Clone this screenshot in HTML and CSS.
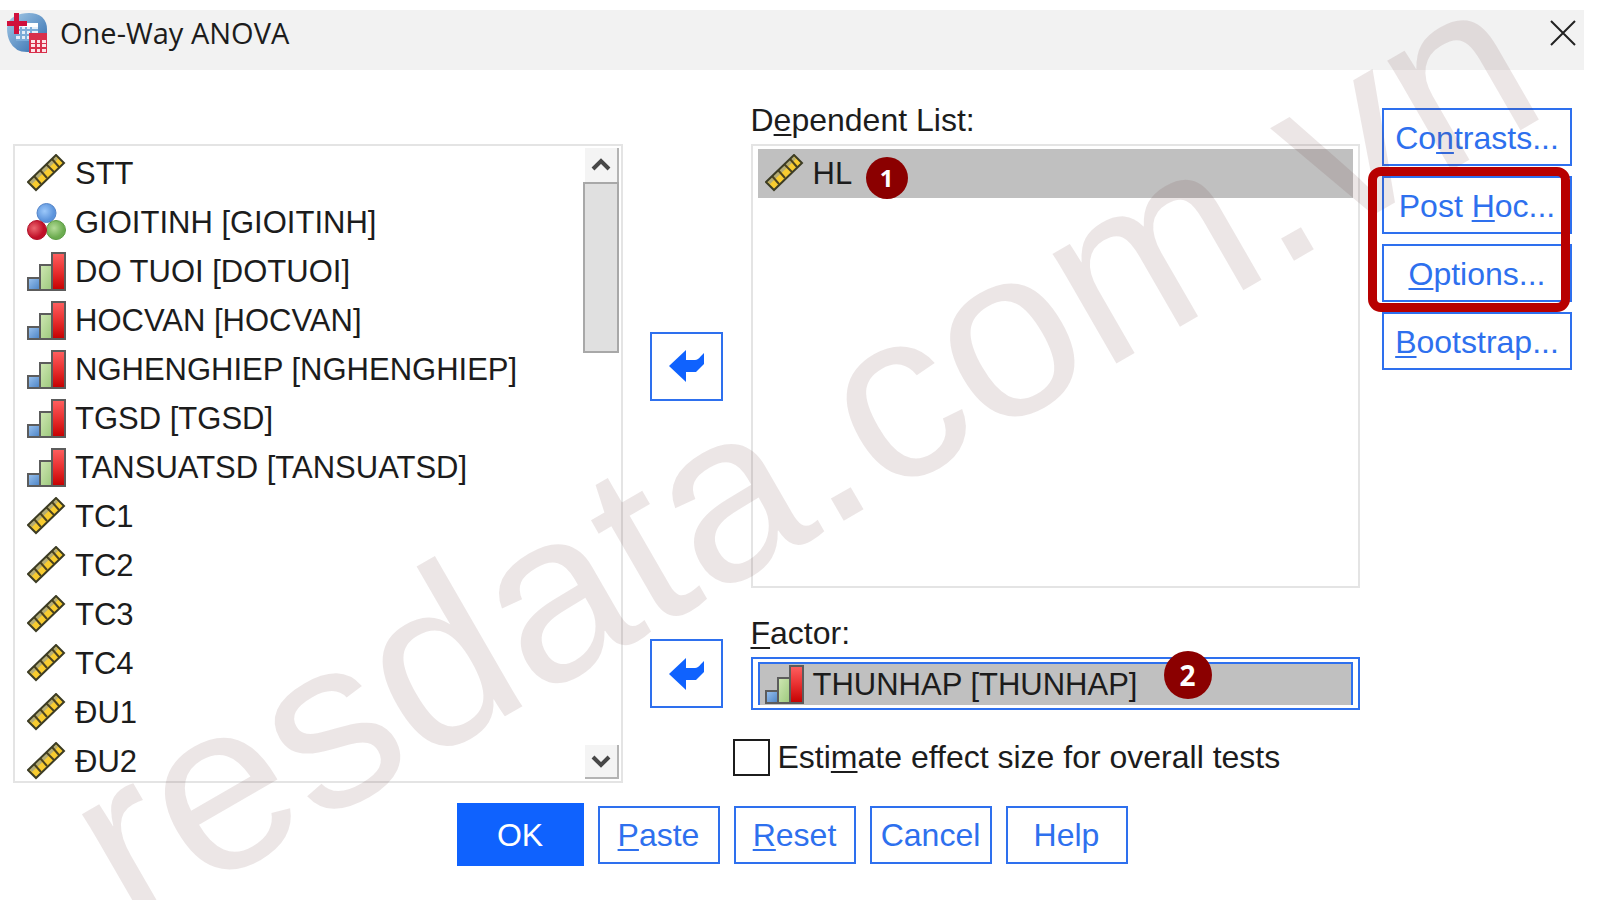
FILE: index.html
```html
<!DOCTYPE html>
<html lang="en">
<head>
<meta charset="UTF-8">
<meta name="viewport" content="width=device-width, initial-scale=1.0">
<title>One-Way ANOVA</title>
<link rel="stylesheet" href="styles.css">
</head>
<body>
<!-- icons shared by the lists -->
<svg class="sprite" aria-hidden="true">
  <defs>
    <linearGradient id="blueBar" x1="0" y1="0" x2="1" y2="1"><stop offset="0" stop-color="#9cc4f0"/><stop offset="1" stop-color="#4a82c4"/></linearGradient>
    <linearGradient id="greenBar" x1="0" y1="0" x2="1" y2="1"><stop offset="0" stop-color="#d0e8b4"/><stop offset="1" stop-color="#9cc87c"/></linearGradient>
    <linearGradient id="redBar" x1="0" y1="0" x2="0" y2="1"><stop offset="0" stop-color="#ff6060"/><stop offset="0.5" stop-color="#e83030"/><stop offset="1" stop-color="#c40000"/></linearGradient>
    <radialGradient id="blueBall" cx="0.4" cy="0.4"><stop offset="0" stop-color="#9cc8fa"/><stop offset="1" stop-color="#5c94dc"/></radialGradient>
    <radialGradient id="redBall" cx="0.35" cy="0.4"><stop offset="0" stop-color="#ec6870"/><stop offset="1" stop-color="#c01028"/></radialGradient>
    <radialGradient id="greenBall" cx="0.4" cy="0.4"><stop offset="0" stop-color="#b4dc98"/><stop offset="1" stop-color="#6cac50"/></radialGradient>
    <linearGradient id="globe" x1="0" y1="0" x2="1" y2="1"><stop offset="0" stop-color="#a8cce8"/><stop offset="0.6" stop-color="#5c90c4"/><stop offset="1" stop-color="#2c68a8"/></linearGradient>
  </defs>
  <symbol id="scale" viewBox="0 0 39 39">
    <path d="M1 28L29 1l8 8L9 36z" fill="#f8cc30"/>
    <path d="M2 27L28 2l3 3L5 30z" fill="#b4ac74"/>
    <path d="M7 22l7 8M13 16l7 8M19 10l8 8M25 5l7 8" stroke="#4c4420" stroke-width="2"/>
    <path d="M1 28L29 1l8 8L9 36z" fill="none" stroke="#3c3c24" stroke-width="2"/>
  </symbol>
  <symbol id="nominal" viewBox="0 0 39 39">
    <circle cx="19.500" cy="10" r="9.500" fill="url(#blueBall)" stroke="#5484c8"/>
    <circle cx="29" cy="27" r="9.500" fill="url(#greenBall)" stroke="#5c9c44"/>
    <circle cx="10" cy="27" r="9.500" fill="url(#redBall)" stroke="#b01028"/>
  </symbol>
  <symbol id="ordinal" viewBox="0 0 39 39">
    <g stroke="#5c5c5c" stroke-width="2">
      <path d="M1 26h12v12H1z" fill="url(#blueBar)"/>
      <path d="M13 13h12v25H13z" fill="url(#greenBar)"/>
      <path d="M25 1h13v37H25z" fill="url(#redBar)"/>
    </g>
  </symbol>
  <symbol id="move" viewBox="0 0 36 34">
    <path d="M0 17L17 1v10h9q3 0 6-4l3-3v11l-8 8H17v10z"/>
  </symbol>
</svg>

<div class="dialog">
  <header class="titlebar">
    <svg class="app-icon" viewBox="0 0 40 40" aria-hidden="true">
      <path d="M8 3Q14 0 22 0q8 0 13 4 5 5 5 12v12q0 11-12 11h-8Q8 39 3 29 0 23 0 15 1 6 8 3z" fill="url(#globe)"/>
      <path d="M12 11h19v17H9V20h3z" fill="#e4eef8"/>
      <path d="M9 17h22M9 22h22M9 27h16M14 14v14M19 14v14M24 14v14" stroke="#7cacd8" stroke-width="2"/>
      <path d="M16 10h15v4H16z" fill="#fff"/>
      <path d="M0 8h7V0h5v8h8v5h-8v8H7v-8H0z" fill="#d0103c"/>
      <path d="M22 20h18v20H22z" fill="#d8304c"/>
      <path d="M24 27h4v3h-4zM30 27h3v3h-3zM35 27h4v3h-4zM24 31h4v3h-4zM30 31h3v3h-3zM35 31h4v3h-4zM24 36h4v3h-4zM30 36h3v3h-3zM35 36h4v3h-4z" fill="#fce4e8"/>
    </svg>
    <h1>One-Way ANOVA</h1>
    <button type="button" class="close" aria-label="Close">
      <svg viewBox="0 0 26 26"><path d="M1 1l24 24M25 1L1 25" stroke="#222" stroke-width="2"/></svg>
    </button>
  </header>

  <form class="content">
    <div class="box source">
      <ul class="variables" role="listbox" aria-label="Variables">
        <li role="option"><svg><use href="#scale"/></svg>STT</li>
        <li role="option"><svg><use href="#nominal"/></svg>GIOITINH [GIOITINH]</li>
        <li role="option"><svg><use href="#ordinal"/></svg>DO TUOI [DOTUOI]</li>
        <li role="option"><svg><use href="#ordinal"/></svg>HOCVAN [HOCVAN]</li>
        <li role="option"><svg><use href="#ordinal"/></svg>NGHENGHIEP [NGHENGHIEP]</li>
        <li role="option"><svg><use href="#ordinal"/></svg>TGSD [TGSD]</li>
        <li role="option"><svg><use href="#ordinal"/></svg>TANSUATSD [TANSUATSD]</li>
        <li role="option"><svg><use href="#scale"/></svg>TC1</li>
        <li role="option"><svg><use href="#scale"/></svg>TC2</li>
        <li role="option"><svg><use href="#scale"/></svg>TC3</li>
        <li role="option"><svg><use href="#scale"/></svg>TC4</li>
        <li role="option"><svg><use href="#scale"/></svg>ĐU1</li>
        <li role="option"><svg><use href="#scale"/></svg>ĐU2</li>
      </ul>
      <div class="scrollbar">
        <button type="button" class="scroll-btn" aria-label="Scroll up"><svg viewBox="0 0 20 14"><path d="M2 11l8-8 8 8"/></svg></button>
        <div class="thumb"></div>
        <button type="button" class="scroll-btn down" aria-label="Scroll down"><svg viewBox="0 0 20 14"><path d="M2 3l8 8 8-8"/></svg></button>
      </div>
    </div>

    <button type="button" class="move move-dependent" aria-label="Move to Dependent List"><svg><use href="#move"/></svg></button>
    <button type="button" class="move move-factor" aria-label="Move to Factor"><svg><use href="#move"/></svg></button>

    <div class="label dependent-label" id="dependentLabel">D<u>e</u>pendent List:</div>
    <div class="box dependent">
      <ul class="variables" role="listbox" aria-labelledby="dependentLabel">
        <li role="option" class="selected" aria-selected="true"><svg><use href="#scale"/></svg>HL<span class="badge badge-one">1</span></li>
      </ul>
    </div>

    <div class="label factor-label" id="factorLabel"><u>F</u>actor:</div>
    <div class="factor">
      <ul class="variables" role="listbox" aria-labelledby="factorLabel">
        <li role="option" class="selected" aria-selected="true"><svg><use href="#ordinal"/></svg>THUNHAP [THUNHAP]</li>
      </ul>
      <span class="badge badge-two">2</span>
    </div>

    <div class="estimate">
      <input type="checkbox" id="effectSize">
      <label for="effectSize">Esti<u>m</u>ate effect size for overall tests</label>
    </div>

    <div class="options">
      <button type="button" class="btn">Co<u>n</u>trasts...</button>
      <div class="highlight">
        <button type="button" class="btn">Post <u>H</u>oc...</button>
        <button type="button" class="btn"><u>O</u>ptions...</button>
      </div>
      <button type="button" class="btn"><u>B</u>ootstrap...</button>
    </div>
  </form>

  <footer class="actions">
    <button type="button" class="btn ok">OK</button>
    <button type="button" class="btn"><u>P</u>aste</button>
    <button type="button" class="btn"><u>R</u>eset</button>
    <button type="button" class="btn">Cancel</button>
    <button type="button" class="btn">Help</button>
  </footer>
</div>
<div class="overlay"><span class="watermark">resdata.com.vn</span></div>
</body>
</html>
```

FILE: styles.css
```css
* {
  box-sizing: border-box;
}
body {
  margin: 0;
  position: relative;
  min-height: 100vh;
  background-color: #fff;
  color: #1c1c1c;
  font-family: "Liberation Sans", Arial, sans-serif;
  font-size: 32px;
}
button {
  font-family: inherit;
  padding: 0;
  cursor: pointer;
}
u {
  text-decoration-thickness: 2px;
  text-underline-offset: 3px;
  text-decoration-skip-ink: none;
}
.sprite {
  position: absolute;
  width: 0;
  height: 0;
}
.dialog {
  margin: 0 16px 0 0;
  padding-top: 10px;
}

/* title bar */
.titlebar {
  display: flex;
  align-items: center;
  height: 60px;
  padding: 0 8px 14px 7px;
  background-color: #f2f2f2;
}
.app-icon {
  width: 40px;
  height: 40px;
}
.titlebar h1 {
  flex: 1;
  margin: 0 0 0 13px;
  font-family: "Open Sans", "Noto Sans", sans-serif;
  font-size: 29px;
  font-weight: normal;
  line-height: 40px;
}
.close {
  width: 26px;
  height: 26px;
  border: none;
  background: none;
}
.close svg {
  display: block;
}

/* main area */
.content {
  display: grid;
  grid-template-columns: 1fr 84px 1fr 190px;
  grid-template-rows: 47px 444px 69px 53px 73px;
  column-gap: 22px;
  padding: 27px 12px 0 13px;
}
.box {
  border: 2px solid #e4e4e4;
}
.source {
  grid-column: 1;
  grid-row: 2 / 6;
  display: flex;
  min-height: 0;
  overflow: hidden;
}
.variables {
  flex: 1;
  margin: 0;
  padding: 3px 5px 0;
  font-size: 31px;
  list-style: none;
}
.variables li {
  position: relative;
  display: flex;
  align-items: center;
  gap: 9px;
  height: 49px;
  padding-left: 7px;
  white-space: nowrap;
}
.variables svg {
  width: 39px;
  height: 39px;
}
.variables .selected {
  background-color: #c0c0c0;
}
.scrollbar {
  display: flex;
  flex-direction: column;
  width: 36px;
  margin: 2px;
}
.scroll-btn {
  height: 34px;
  margin-left: 2px;
  border: none;
  border-right: 2px solid #b4b4b4;
  background-color: #f4f4f4;
}
.scroll-btn svg {
  display: block;
  width: 20px;
  height: 14px;
  margin: auto;
  fill: none;
  stroke: #484848;
  stroke-width: 4;
}
.scroll-btn.down {
  margin-top: auto;
  border-bottom: 2px solid #b4b4b4;
}
.thumb {
  height: 171px;
  border: 2px solid #a8a8a8;
  background-color: #e0e0e0;
}
.move {
  grid-column: 2;
  justify-self: center;
  width: 73px;
  height: 69px;
  border: 2px solid #2e70ee;
  background-color: #fff;
}
.move svg {
  display: block;
  width: 36px;
  height: 34px;
  margin: auto;
  fill: #0f62fe;
}
.move-dependent {
  grid-row: 2;
  align-self: center;
}
.move-factor {
  grid-row: 3 / 5;
  align-self: end;
  margin-bottom: 2px;
}
.label {
  grid-column: 3;
  align-self: end;
  line-height: 47px;
}
.dependent-label {
  grid-row: 1;
}
.dependent {
  grid-column: 3;
  grid-row: 2;
}
.factor-label {
  grid-row: 3;
}
.factor {
  position: relative;
  grid-column: 3;
  grid-row: 4;
  padding: 3px 5px;
  border: 2px solid #2e70ee;
}
.factor .variables {
  padding: 0;
}
.factor .selected {
  height: 43px;
  padding-left: 5px;
  border: 2px solid #2e70ee;
  border-bottom: none;
}
.estimate {
  grid-column: 2 / 5;
  grid-row: 5;
  display: flex;
  align-items: end;
  gap: 8px;
  padding: 0 0 7px 88px;
}
.estimate input {
  appearance: none;
  width: 37px;
  height: 37px;
  margin: 0;
  border: 2px solid #1c1c1c;
  background-color: #fff;
}
.estimate label {
  line-height: 37px;
}

/* buttons */
.btn {
  height: 58px;
  padding-top: 2px;
  border: 2px solid #2e70ee;
  background-color: #fff;
  color: #2e70ee;
  font-size: 32px;
}
.options {
  grid-column: 4;
  grid-row: 1 / 3;
  display: flex;
  flex-direction: column;
  gap: 10px;
  padding-top: 11px;
}
.highlight {
  position: relative;
  display: flex;
  flex-direction: column;
  gap: 10px;
}
.highlight::after {
  content: "";
  position: absolute;
  z-index: 2;
  inset: -9px 2px -10px -14px;
  border: 9px solid #b80000;
  border-radius: 13px;
  pointer-events: none;
}
.actions {
  display: flex;
  justify-content: center;
  align-items: center;
  gap: 14px;
  padding-top: 20px;
}
.actions .btn {
  width: 122px;
}
.actions .ok {
  width: 127px;
  height: 63px;
  border-color: #0f62fe;
  background-color: #0f62fe;
  color: #fff;
}

/* step numbers */
.badge {
  position: absolute;
  z-index: 2;
  border-radius: 50%;
  background-color: #8b0000;
  color: #fff;
  font-family: "Open Sans", sans-serif;
  font-weight: bold;
  text-align: center;
}
.badge-one {
  top: 8px;
  left: 108px;
  width: 42px;
  font-size: 24px;
  line-height: 42px;
}
.badge-two {
  top: -8px;
  left: 411px;
  width: 48px;
  font-size: 28px;
  line-height: 48px;
}

/* watermark lies over the whole window */
.overlay {
  position: absolute;
  z-index: 1;
  inset: 0;
  display: flex;
  align-items: center;
  justify-content: center;
  overflow: hidden;
  pointer-events: none;
}
.watermark {
  transform: rotate(-30deg);
  color: rgba(100, 50, 50, 0.12);
  font-size: 240px;
  line-height: 1;
  white-space: nowrap;
}
```
